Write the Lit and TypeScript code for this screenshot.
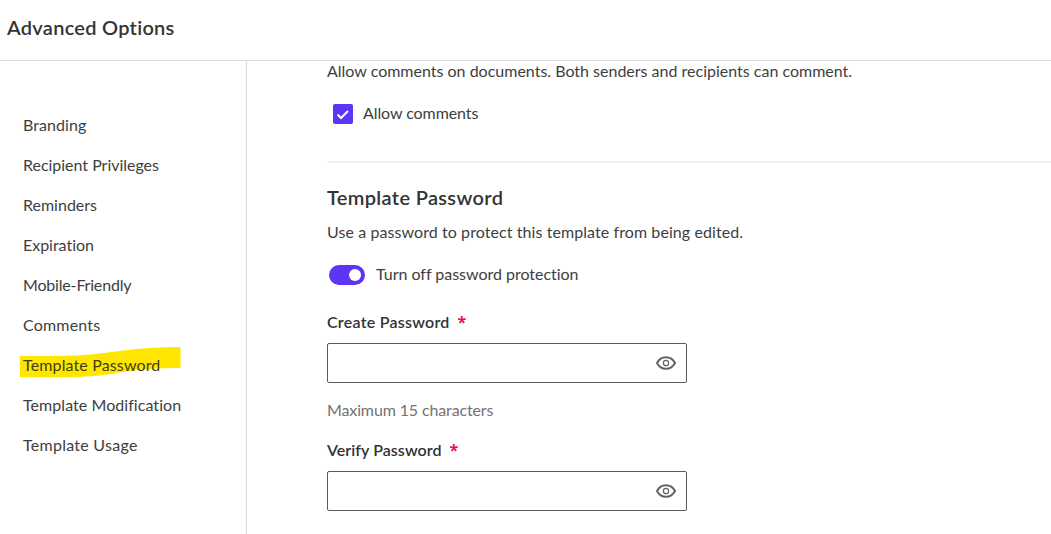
import { LitElement, html, css, type TemplateResult } from "lit";
import { customElement, property, state } from "lit/decorators.js";
import { classMap } from "lit/directives/class-map.js";
import { styleMap } from "lit/directives/style-map.js";

@customElement("password-field")
export class PasswordField extends LitElement {
  @property({ type: String })
  label = "";

  @property({ type: String })
  hint = "";

  @state()
  private revealed = false;

  static styles = css`
    :host {
      display: block;
      width: 360px;
    }

    label {
      display: flex;
      gap: 8px;
      height: 20px;
      line-height: 18px;
      font-size: 16px;
      font-weight: 600;
      letter-spacing: var(--label-tracking, 0.25px);
      color: #333;
    }

    .required {
      color: #e0145a;
      font-family: "Open Sans", sans-serif;
      font-size: 16px;
      font-weight: 700;
      line-height: 18px;
    }

    .control {
      display: flex;
      align-items: center;
      box-sizing: border-box;
      height: 40px;
      margin-top: 10px;
      padding-right: 10px;
      border: 1px solid #58585b;
      border-radius: 2px;
      background: #fff;
    }

    input {
      flex: 1;
      min-width: 0;
      padding: 0 12px;
      border: 0;
      outline: 0;
      background: transparent;
      font: inherit;
    }

    button {
      display: flex;
      padding: 0;
      border: 0;
      background: none;
      cursor: pointer;
    }

    .hint {
      height: 20px;
      margin-top: 17px;
      padding-bottom: 1px;
      line-height: 20px;
      letter-spacing: -0.13px;
      color: #737373;
    }
  `;

  render(): TemplateResult {
    return html`
      <label for="input">${this.label}<span class="required">*</span></label>
      <div class="control">
        <input id="input" type=${this.revealed ? "text" : "password"} maxlength="15" />
        <button aria-label="Show password" @click=${this.toggle}>
          <svg width="20" height="20" viewBox="0 0 20 20" fill="none" stroke="#626265">
            <path
              d="M1 10C3.1 6 6.2 4.200 10 4.200s6.900 1.800 9 5.800c-2.100 4-5.200 5.800-9 5.800s-6.900-1.800-9-5.800z"
              stroke-width="2"
            />
            <circle cx="10" cy="10" r="2.600" stroke-width="1.200" />
          </svg>
        </button>
      </div>
      ${this.hint ? html`<div class="hint">${this.hint}</div>` : ""}
    `;
  }

  private toggle(): void {
    this.revealed = !this.revealed;
  }
}

interface Section {
  name: string;
  tracking: number;
}

const sections: Section[] = [
  { name: "Branding", tracking: 0.08 },
  { name: "Recipient Privileges", tracking: -0.02 },
  { name: "Reminders", tracking: 0 },
  { name: "Expiration", tracking: -0.02 },
  { name: "Mobile-Friendly", tracking: -0.18 },
  { name: "Comments", tracking: 0.18 },
  { name: "Template Password", tracking: 0.14 },
  { name: "Template Modification", tracking: 0.06 },
  { name: "Template Usage", tracking: 0.27 },
];

@customElement("app-root")
export class AppRoot extends LitElement {
  @state()
  private active = "Template Password";

  static styles = css`
    :host {
      display: flex;
      flex-direction: column;
      height: 534px;
      overflow: hidden;
      background: #fff;
      color: #3e3e40;
      font-family: Lato, "Liberation Sans", sans-serif;
      font-size: 16px;
      font-variant-ligatures: none;
    }

    header {
      flex: none;
      box-sizing: border-box;
      height: 61px;
      padding: 15px 7px;
      border-bottom: 1px solid #dedede;
    }

    h1,
    h2,
    p {
      margin: 0;
    }

    h1 {
      font-size: 20px;
      font-weight: 600;
      line-height: 24px;
      letter-spacing: 0.27px;
      color: #333;
    }

    .body {
      display: flex;
      flex: 1;
      min-height: 0;
    }

    nav {
      flex: none;
      box-sizing: border-box;
      width: 247px;
      padding: 44px 0 0 23px;
      border-right: 1px solid #d9d9d9;
    }

    .item {
      position: relative;
      height: 40px;
      line-height: 40px;
      cursor: pointer;
    }

    .item span {
      position: relative;
    }

    .item.active {
      color: #413d10;
    }

    .marker {
      position: absolute;
      top: 2px;
      left: -3px;
    }

    main {
      flex: 1;
      min-width: 0;
      padding-left: 80px;
    }

    .text {
      height: 22px;
      line-height: 20px;
      letter-spacing: 0.08px;
    }

    .comments {
      letter-spacing: 0;
    }

    .option {
      display: flex;
      align-items: center;
      height: 20px;
    }

    .caption {
      height: 20px;
      line-height: 17px;
    }

    .allow {
      gap: 10px;
      margin-top: 21px;
      padding-left: 6px;
      letter-spacing: -0.08px;
    }

    .checkbox {
      display: flex;
      width: 20px;
      height: 20px;
      border-radius: 2px;
      background: #5c35f5;
    }

    hr {
      height: 2px;
      margin: 37px 0 0;
      border: 0;
      background: #f0f0f0;
    }

    h2 {
      height: 24px;
      margin: 22px 0 13px;
      font-size: 20px;
      font-weight: 600;
      line-height: 24px;
      letter-spacing: 0.34px;
      color: #333;
    }

    .protect {
      gap: 11px;
      margin-top: 21px;
      padding-left: 2px;
      letter-spacing: -0.02px;
    }

    .switch {
      display: flex;
      align-items: center;
      justify-content: flex-end;
      box-sizing: border-box;
      width: 36px;
      height: 20px;
      padding: 0 4px;
      border-radius: 10px;
      background: #5c35f5;
    }

    .knob {
      width: 12px;
      height: 12px;
      border-radius: 50%;
      background: #fff;
    }

    .create {
      margin-top: 28px;
    }

    .verify {
      --label-tracking: 0.06px;
      margin-top: 20px;
    }
  `;

  render(): TemplateResult {
    return html`
      <header><h1>Advanced Options</h1></header>
      <div class="body">
        <nav>${sections.map((section) => this.renderItem(section))}</nav>
        <main>
          <p class="text comments">
            Allow comments on documents. Both senders and recipients can comment.
          </p>
          <div class="option allow">
            <span class="checkbox">
              <svg width="20" height="20" fill="none" stroke="#fff" stroke-width="2">
                <path d="M4.500 10.500L8 14l7-7" />
              </svg>
            </span>
            <span class="caption">Allow comments</span>
          </div>
          <hr />
          <h2>Template Password</h2>
          <p class="text">Use a password to protect this template from being edited.</p>
          <div class="option protect">
            <span class="switch"><span class="knob"></span></span>
            <span class="caption">Turn off password protection</span>
          </div>
          <password-field
            class="create"
            label="Create Password"
            hint="Maximum 15 characters"
          ></password-field>
          <password-field class="verify" label="Verify Password"></password-field>
        </main>
      </div>
    `;
  }

  private renderItem({ name, tracking }: Section): TemplateResult {
    const active = name === this.active;
    return html`
      <div class=${classMap({ item: true, active })} @click=${() => (this.active = name)}>
        ${active
          ? html`<svg class="marker" width="162" height="32" fill="#ffe600">
              <path
                d="M0 9C28 9 50 9.500 70 7.500C100 4.500 120 0 160.500 0V21C115 21 100 26.500 75 29C52 31 28 30 0 30z"
              />
            </svg>`
          : ""}
        <span style=${styleMap({ letterSpacing: `${tracking}px` })}>${name}</span>
      </div>
    `;
  }
}

declare global {
  interface HTMLElementTagNameMap {
    "password-field": PasswordField;
    "app-root": AppRoot;
  }
}
